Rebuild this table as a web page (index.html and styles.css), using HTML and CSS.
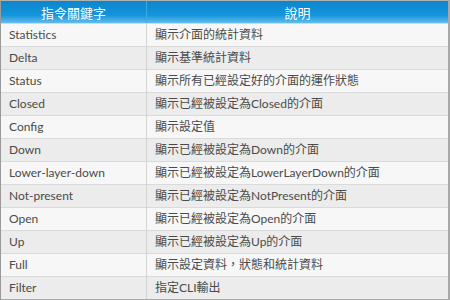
FILE: index.html
```html
<!DOCTYPE html>
<html lang="zh-Hant">
<head>
<meta charset="utf-8">
<link rel="stylesheet" href="styles.css">
</head>
<body>
<table class="kw">
  <thead>
    <tr><th class="c1">指令關鍵字</th><th class="c2">說明</th></tr>
  </thead>
  <tbody>
    <tr><td>Statistics</td><td>顯示介面的統計資料</td></tr>
    <tr><td>Delta</td><td>顯示基準統計資料</td></tr>
    <tr><td>Status</td><td>顯示所有已經設定好的介面的運作狀態</td></tr>
    <tr><td>Closed</td><td>顯示已經被設定為Closed的介面</td></tr>
    <tr><td>Config</td><td>顯示設定值</td></tr>
    <tr><td>Down</td><td>顯示已經被設定為Down的介面</td></tr>
    <tr><td>Lower-layer-down</td><td>顯示已經被設定為LowerLayerDown的介面</td></tr>
    <tr><td>Not-present</td><td>顯示已經被設定為NotPresent的介面</td></tr>
    <tr><td>Open</td><td>顯示已經被設定為Open的介面</td></tr>
    <tr><td>Up</td><td>顯示已經被設定為Up的介面</td></tr>
    <tr><td>Full</td><td>顯示設定資料，狀態和統計資料</td></tr>
    <tr><td>Filter</td><td>指定CLI輸出</td></tr>
  </tbody>
</table>
</body>
</html>
```
FILE: styles.css
```css
html, body {
  margin: 0;
  padding: 0;
  background: #ffffff;
}
.kw {
  width: 450px;
  border-collapse: separate;
  border-spacing: 0;
  font-family: Lato, "Noto Sans CJK TC", sans-serif;
  font-size: 12px;
  color: #4a4a4a;
  border-left: 1px solid #9a9a9a;
  border-top: 1px solid #b0b0b0;
  border-right: 2px solid #a8a8a8;
  border-bottom: 3px solid #a8a8a8;
  box-sizing: border-box;
}
.kw th {
  height: 22px;
  padding: 0;
  font-weight: normal;
  color: #ffffff;
  text-align: center;
  background: linear-gradient(#0a86cc 0%, #1595dc 65%, #64bcec 100%);
  font-size: 13px;
}
.kw th.c1 {
  width: 145px;
  border-right: 1px solid #3ea6e0;
}
.kw td {
  height: 22px;
  padding: 0 0 0 8px;
  border-top: 1px solid #dadada;
  white-space: nowrap;
  line-height: 22px;
}
.kw td:first-child {
  border-right: 1px solid #d4d4d4;
}
.kw tbody tr:nth-child(odd) td {
  background: #f7f7f7;
}
.kw tbody tr:nth-child(even) td {
  background: #ececec;
}
```
